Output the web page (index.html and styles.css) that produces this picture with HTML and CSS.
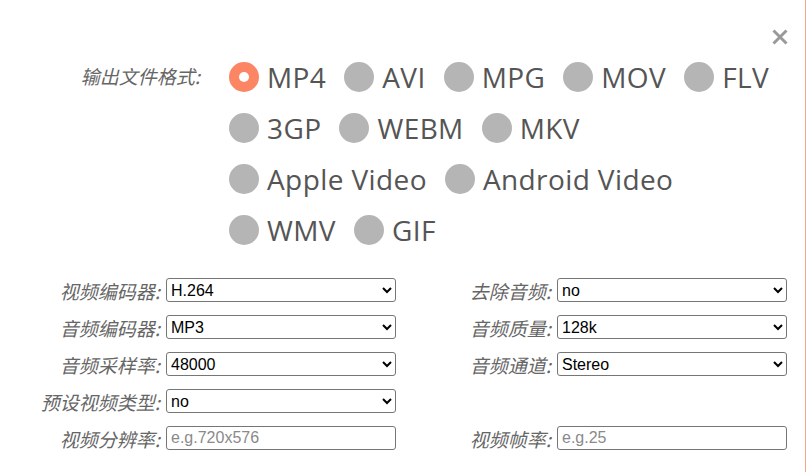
FILE: index.html
```html
<!DOCTYPE html>
<html lang="zh-CN">
<head>
    <meta charset="UTF-8">
    <meta name="viewport" content="width=device-width, initial-scale=1.0">
    <title>视频转换设置</title>
    <link rel="stylesheet" href="styles.css">
</head>
<body>
    <div class="dialog">
        <div class="close-bar">
            <button class="close-btn" aria-label="关闭">
                <svg width="18" height="18" viewBox="0 0 18 18">
                    <path d="M2.5 2.5 L15.5 15.5 M15.5 2.5 L2.5 15.5" stroke="#9a9a9a" stroke-width="3" stroke-linecap="butt" fill="none"/>
                </svg>
            </button>
        </div>

        <div class="format-row">
            <div class="format-label">输出文件格式:</div>
            <div class="options">
                <label class="option checked"><span class="dot"></span>MP4</label>
                <label class="option"><span class="dot"></span>AVI</label>
                <label class="option"><span class="dot"></span>MPG</label>
                <label class="option"><span class="dot"></span>MOV</label>
                <label class="option"><span class="dot"></span>FLV</label>
                <label class="option"><span class="dot"></span>3GP</label>
                <label class="option"><span class="dot"></span>WEBM</label>
                <label class="option"><span class="dot"></span>MKV</label>
                <label class="option"><span class="dot"></span>Apple Video</label>
                <label class="option"><span class="dot"></span>Android Video</label>
                <label class="option"><span class="dot"></span>WMV</label>
                <label class="option"><span class="dot"></span>GIF</label>
            </div>
        </div>

        <div class="settings">
            <div class="field">
                <label for="vcodec">视频编码器:</label>
                <select id="vcodec"><option>H.264</option></select>
            </div>
            <div class="field">
                <label for="noaudio">去除音频:</label>
                <select id="noaudio"><option>no</option></select>
            </div>
            <div class="field">
                <label for="acodec">音频编码器:</label>
                <select id="acodec"><option>MP3</option></select>
            </div>
            <div class="field">
                <label for="aquality">音频质量:</label>
                <select id="aquality"><option>128k</option></select>
            </div>
            <div class="field">
                <label for="arate">音频采样率:</label>
                <select id="arate"><option>48000</option></select>
            </div>
            <div class="field">
                <label for="achannel">音频通道:</label>
                <select id="achannel"><option>Stereo</option></select>
            </div>
            <div class="field">
                <label for="preset">预设视频类型:</label>
                <select id="preset"><option>no</option></select>
            </div>
            <div class="field"></div>
            <div class="field">
                <label for="size">视频分辨率:</label>
                <input type="text" id="size" placeholder="e.g.720x576">
            </div>
            <div class="field">
                <label for="fps">视频帧率:</label>
                <input type="text" id="fps" placeholder="e.g.25">
            </div>
        </div>
    </div>
</body>
</html>
```

FILE: styles.css
```css
body {
    margin: 0;
    background: #fff;
}
.dialog {
    width: 805px;
    height: 472px;
    border-right: 1px solid #f6a58c;
    font-family: "Noto Sans CJK SC", sans-serif;
}
.close-bar {
    display: flex;
    justify-content: flex-end;
    padding: 28px 16px 0 0;
}
.close-btn {
    width: 18px;
    height: 18px;
    padding: 0;
    border: none;
    background: none;
    cursor: pointer;
    display: block;
}
.close-btn svg {
    display: block;
}
.format-row {
    display: flex;
    margin-top: 16px;
}
.format-label {
    width: 200px;
    margin-right: 29px;
    text-align: right;
    font-size: 19px;
    line-height: 28px;
    font-style: italic;
    color: #666;
}
.options {
    width: 550px;
    display: flex;
    flex-wrap: wrap;
    column-gap: 18px;
    row-gap: 21px;
}
.option {
    display: flex;
    align-items: center;
    height: 30px;
    font-family: "Open Sans", sans-serif;
    font-size: 28px;
    letter-spacing: 0.4px;
    color: #555;
    cursor: pointer;
}
.dot {
    width: 30px;
    height: 30px;
    border-radius: 50%;
    background: #b5b5b5;
    margin-right: 8px;
    flex-shrink: 0;
    position: relative;
}
.checked .dot {
    background: #fc8564;
}
.checked .dot::after {
    content: "";
    position: absolute;
    left: 10px;
    top: 10px;
    width: 10px;
    height: 10px;
    border-radius: 50%;
    background: #fff;
}
.settings {
    display: grid;
    grid-template-columns: 391px 391px;
    row-gap: 13px;
    padding-left: 5px;
    margin-top: 33px;
}
.field {
    display: flex;
    align-items: center;
    height: 24px;
}
.field label {
    width: 161px;
    padding-right: 6px;
    box-sizing: border-box;
    text-align: right;
    font-size: 19px;
    font-style: italic;
    color: #666;
    white-space: nowrap;
}
.field select,
.field input {
    width: 230px;
    height: 24px;
    box-sizing: border-box;
    border: 1px solid #767676;
    border-radius: 3px;
    background: #fff;
    font-family: "Liberation Sans", Arial, sans-serif;
    font-size: 16px;
    color: #000;
}
.field input {
    padding: 1px 4px;
}
.field input::placeholder {
    color: #8a8a8a;
}
```
